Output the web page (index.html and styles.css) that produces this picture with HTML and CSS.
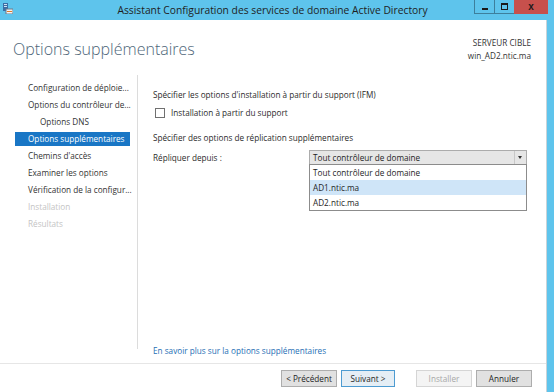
FILE: index.html
```html
<!DOCTYPE html>
<html lang="fr">
<head>
    <meta charset="UTF-8">
    <title>Assistant Configuration des services de domaine Active Directory</title>
    <link rel="stylesheet" href="styles.css">
</head>
<body>
<div class="window">
    <div class="titlebar">
        <svg class="app-icon" width="10" height="11" viewBox="0 0 10 11">
            <rect x="0" y="0" width="5" height="8" fill="#3a6ea5"/>
            <rect x="1" y="1" width="3" height="1" fill="#cfe3f5"/>
            <rect x="1" y="3" width="3" height="1" fill="#cfe3f5"/>
            <rect x="3" y="6" width="7" height="5" fill="#f3f3f3" stroke="#6b7b8b" stroke-width="1"/>
            <rect x="4" y="8" width="5" height="1" fill="#e07a2a"/>
        </svg>
        <div class="title">Assistant Configuration des services de domaine Active Directory</div>
        <div class="controls">
            <div class="ctl ctl-min"><span class="glyph-min"></span></div>
            <div class="ctl ctl-max"><span class="glyph-max"></span></div>
            <div class="ctl ctl-close">x</div>
        </div>
    </div>
    <div class="frame">
        <div class="client">
            <div class="header">
                <h1>Options supplémentaires</h1>
                <div class="target">
                    <div>SERVEUR CIBLE</div>
                    <div>win_AD2.ntic.ma</div>
                </div>
            </div>
            <div class="main">
                <ul class="nav">
                    <li>Configuration de déploie...</li>
                    <li>Options du contrôleur de...</li>
                    <li class="sub">Options DNS</li>
                    <li class="current">Options supplémentaires</li>
                    <li>Chemins d'accès</li>
                    <li>Examiner les options</li>
                    <li>Vérification de la configur...</li>
                    <li class="disabled">Installation</li>
                    <li class="disabled">Résultats</li>
                </ul>
                <div class="content">
                    <div class="line">Spécifier les options d'installation à partir du support (IFM)</div>
                    <label class="check-row"><span class="checkbox"></span>Installation à partir du support</label>
                    <div class="line section">Spécifier des options de réplication supplémentaires</div>
                    <div class="repl-row">
                        <span class="repl-label">Répliquer depuis :</span>
                        <div class="combo">
                            <div class="combo-box">
                                <span class="combo-value">Tout contrôleur de domaine</span>
                                <span class="combo-arrow"></span>
                            </div>
                            <ul class="combo-list">
                                <li>Tout contrôleur de domaine</li>
                                <li class="hover">AD1.ntic.ma</li>
                                <li>AD2.ntic.ma</li>
                            </ul>
                        </div>
                    </div>
                    <a class="more" href="#">En savoir plus sur la options supplémentaires</a>
                </div>
            </div>
            <div class="footer">
                <button class="btn">&lt; Précédent</button>
                <button class="btn btn-next">Suivant &gt;</button>
                <button class="btn btn-install" disabled>Installer</button>
                <button class="btn">Annuler</button>
            </div>
        </div>
    </div>
</div>
</body>
</html>
```

FILE: styles.css
```css
body {
    margin: 0;
    width: 554px;
    height: 392px;
    overflow: hidden;
    font-family: 'Open Sans', 'Noto Sans', sans-serif;
    font-size: 8.2px;
    color: #2b2b2b;
}
.window {
    display: flex;
    flex-direction: column;
    height: 392px;
    background-color: #5ec4ec;
}
.titlebar {
    height: 20px;
    display: flex;
    align-items: flex-start;
}
.app-icon {
    margin: 3px 0 0 3px;
}
.title {
    flex: 1;
    text-align: center;
    font-size: 10.3px;
    line-height: 20px;
    color: #1e1e1e;
    padding-left: 58px;
}
.controls {
    display: flex;
    margin-right: 6px;
}
.ctl {
    height: 14px;
    display: flex;
    justify-content: center;
    align-items: center;
    box-sizing: border-box;
}
.ctl-min, .ctl-max {
    width: 20px;
    border-left: 1px solid #3d7f9c;
    border-bottom: 1px solid #3d7f9c;
}
.glyph-min {
    width: 6px;
    height: 2px;
    background-color: #1a1a1a;
    margin-top: 4px;
}
.glyph-max {
    width: 5px;
    height: 4px;
    border: 1px solid #1a1a1a;
    border-top-width: 2px;
}
.ctl-close {
    width: 34px;
    background-color: #c7504c;
    color: #1a1a1a;
    font-weight: bold;
    font-size: 10px;
    font-family: 'Liberation Sans', sans-serif;
    line-height: 14px;
}
.frame {
    flex: 1;
    display: flex;
    padding-right: 7px;
}
.client {
    flex: 1;
    background-color: #fff;
    border-right: 1px solid #c9d3d8;
    display: flex;
    flex-direction: column;
}
.header {
    height: 55px;
    display: flex;
    justify-content: space-between;
    align-items: flex-start;
    padding: 0 15px 0 13px;
}
.header h1 {
    margin: 18px 0 0;
    font-size: 16px;
    font-weight: 300;
    color: #4e6679;
    line-height: 22px;
}
.target {
    margin-top: 16px;
    text-align: right;
    font-size: 8.2px;
    line-height: 13px;
    color: #333;
}
.main {
    flex: 1;
    display: flex;
}
.nav {
    list-style: none;
    margin: 0 0 14px 15px;
    padding: 6px 7px 0 0;
    width: 115px;
    border-right: 1px solid #dcdcdc;
}
.nav li {
    height: 14px;
    line-height: 14px;
    margin-bottom: 3px;
    padding-left: 13px;
    white-space: nowrap;
    color: #333;
}
.nav li.sub {
    padding-left: 25px;
}
.nav li.current {
    background-color: #1976c5;
    color: #fff;
}
.nav li.disabled {
    color: #c4c4c4;
}
.content {
    flex: 1;
    display: flex;
    flex-direction: column;
    padding: 14px 0 6px 15px;
}
.line {
    line-height: 12px;
}
.check-row {
    display: flex;
    align-items: center;
    margin-top: 6px;
    line-height: 12px;
}
.checkbox {
    width: 8px;
    height: 8px;
    border: 1px solid #707070;
    margin: 0 6px 0 2px;
    background-color: #fff;
}
.section {
    margin-top: 13px;
}
.repl-row {
    display: flex;
    align-items: center;
    margin-top: 6px;
}
.repl-label {
    width: 156px;
}
.combo {
    position: relative;
    width: 218px;
}
.combo-box {
    height: 15px;
    box-sizing: border-box;
    border: 1px solid #acacac;
    background-color: #e6e6e6;
    display: flex;
    align-items: center;
}
.combo-value {
    flex: 1;
    padding-left: 3px;
    color: #1e1e1e;
}
.combo-arrow {
    width: 11px;
    height: 13px;
    border-left: 1px solid #c8c8c8;
    position: relative;
}
.combo-arrow::after {
    content: "";
    position: absolute;
    left: 3px;
    top: 5px;
    border-left: 2.5px solid transparent;
    border-right: 2.5px solid transparent;
    border-top: 3px solid #333;
}
.combo-list {
    position: absolute;
    top: 14px;
    left: 0;
    width: 218px;
    box-sizing: border-box;
    margin: 0;
    padding: 0;
    list-style: none;
    background-color: #fff;
    border: 1px solid #8c8c8c;
}
.combo-list li {
    height: 15px;
    line-height: 15px;
    padding-left: 3px;
    color: #1e1e1e;
}
.combo-list li.hover {
    background-color: #cfe5f8;
}
.more {
    margin-top: auto;
    color: #1f6fb5;
    text-decoration: none;
    line-height: 12px;
}
.footer {
    height: 22px;
    border-top: 1px solid #e6e6e6;
    display: flex;
    justify-content: flex-end;
    align-items: flex-start;
    padding: 6px 14px 0 0;
}
.btn {
    height: 17px;
    padding: 0;
    font-family: inherit;
    font-size: 8.2px;
    color: #1e1e1e;
    background-color: #e1e1e1;
    border: 1px solid #adadad;
    width: 56px;
    margin-left: 4px;
}
.btn-next {
    width: 54px;
    background-color: #e5eef5;
    border-color: #4d9bd1;
}
.btn-install {
    margin-left: 21px;
    background-color: #f4f4f4;
    border-color: #d5d5d5;
    color: #a8a8a8;
}
```
